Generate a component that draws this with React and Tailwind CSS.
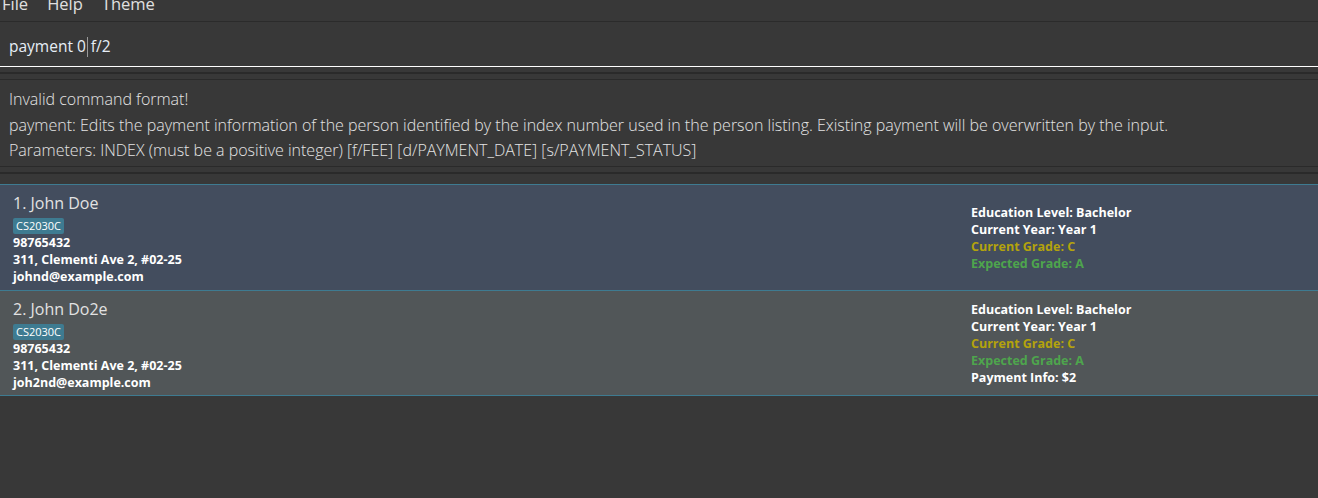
import React from "react";

const people = [
  {
    id: 1,
    name: "John Doe",
    tag: "CS2030C",
    phone: "98765432",
    address: "311, Clementi Ave 2, #02-25",
    email: "johnd@example.com",
    payment: null,
    selected: true,
  },
  {
    id: 2,
    name: "John Do2e",
    tag: "CS2030C",
    phone: "98765432",
    address: "311, Clementi Ave 2, #02-25",
    email: "joh2nd@example.com",
    payment: "$2",
    selected: false,
  },
];

const PersonCard = ({ person }) => (
  <div
    className={
      "flex justify-between border-b border-[#3e7b91] " +
      (person.selected ? "bg-[#434d5e] h-[106px]" : "bg-[#515658] h-[105px]")
    }
  >
    <div className="flex flex-col pl-[13px] pt-[7px]">
      <div className="text-[16px] leading-[22px] text-[#e2e2e2]">
        {person.id}. {person.name}
      </div>
      <div className="mt-[4px] flex">
        <span className="bg-[#3e7b91] text-white text-[11px] leading-[16px] px-[3px] rounded-[2px]">
          {person.tag}
        </span>
      </div>
      <div className="text-[12.5px] font-bold leading-[17px] text-white">{person.phone}</div>
      <div className="text-[12.5px] font-bold leading-[17px] text-white">{person.address}</div>
      <div className="text-[12.5px] font-bold leading-[17px] text-white">{person.email}</div>
    </div>
    <div className="flex flex-col justify-center w-[347px] text-[12.5px] font-bold leading-[17px]">
      <div className="text-white">Education Level: Bachelor</div>
      <div className="text-white">Current Year: Year 1</div>
      <div className="text-[#b4a30c]">Current Grade: C</div>
      <div className="text-[#4ea54d]">Expected Grade: A</div>
      {person.payment && <div className="text-white">Payment Info: {person.payment}</div>}
    </div>
  </div>
);

const App = () => {
  return (
    <div
      className="h-[498px] w-[1318px] overflow-hidden bg-[#383838] flex flex-col text-[#dddddd]"
      style={{ fontFamily: '"Open Sans", "Noto Sans", sans-serif' }}
    >
      {/* menu bar, scrolled partly out of view */}
      <div className="h-[22px] shrink-0 border-b border-[#2b2b2b] overflow-hidden">
        <div className="flex gap-[19px] pl-[2px] -mt-[6px] text-[16.5px] leading-[20px] text-[#e0e0e0]">
          <span>File</span>
          <span>Help</span>
          <span>Theme</span>
        </div>
      </div>

      {/* command box */}
      <div className="h-[45px] shrink-0 border-b border-white flex items-center pl-[9px] pt-[5px] text-[15.5px] text-[#e6eef6]">
        <span>payment 0</span>
        <span className="inline-block w-px h-[20px] bg-[#9a9a9a] ml-[1px] mr-[3px]" />
        <span>f/2</span>
      </div>

      <div className="h-[5px] shrink-0" />
      <div className="h-[2px] shrink-0 bg-[#2a2a2a]" />
      <div className="h-[5px] shrink-0" />

      {/* result display */}
      <div className="h-[88px] shrink-0 border-t border-b border-[#2a2a2a] pl-[9px] pt-[7px] text-[16px] leading-[25.5px] text-[#e4e4e4] font-light">
        <div>Invalid command format!</div>
        <div>
          payment: Edits the payment information of the person identified by the index number used in the person listing. Existing payment will be overwritten by the input.
        </div>
        <div>Parameters: INDEX (must be a positive integer) [f/FEE] [d/PAYMENT_DATE] [s/PAYMENT_STATUS]</div>
      </div>

      <div className="h-[5px] shrink-0" />
      <div className="h-[2px] shrink-0 bg-[#2a2a2a]" />
      <div className="h-[10px] shrink-0" />

      {/* person list */}
      <div className="border-t border-[#3e7b91]">
        {people.map((p) => (
          <PersonCard key={p.id} person={p} />
        ))}
      </div>
    </div>
  );
};

export default App;
